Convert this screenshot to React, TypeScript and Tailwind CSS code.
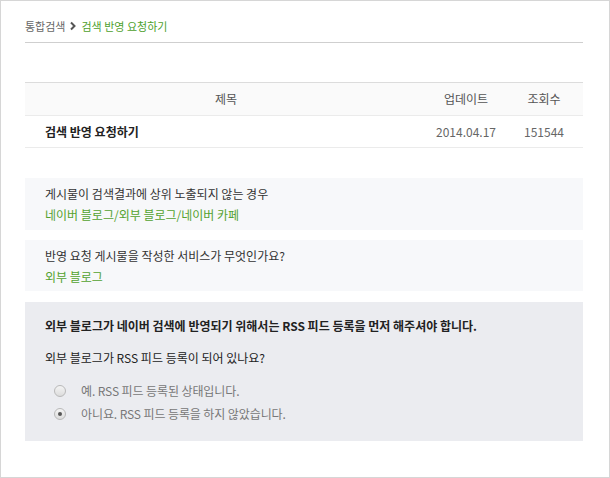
import React from 'react';

const font = { fontFamily: '"Noto Sans CJK KR", "Noto Sans", sans-serif' };

function Radio({ checked }: { checked?: boolean }) {
  return (
    <span className="w-[12px] h-[12px] rounded-full border border-[#b9b9b9] bg-gradient-to-b from-[#f4f4f4] to-[#dcdcdc] flex items-center justify-center">
      {checked && <span className="w-[4px] h-[4px] rounded-full bg-[#555]" />}
    </span>
  );
}

export default function App() {
  return (
    <div
      style={font}
      className="w-[610px] h-[478px] border border-[#d6d6d6] bg-white pl-[24px] pr-[26px] text-[12px] text-[#333]"
    >
      {/* breadcrumb */}
      <div className="pt-[16px] pb-[7px] leading-[18px] border-b border-[#cfcfcf] flex items-center text-[11px]">
        <span className="text-[#666]">통합검색</span>
        <svg width="10" height="10" viewBox="0 0 10 10" className="mx-[3px]">
          <path d="M3 1.5 L6.5 5 L3 8.5" stroke="#555" strokeWidth="2" fill="none" />
        </svg>
        <span className="text-[#4e9f2d]">검색 반영 요청하기</span>
      </div>

      {/* table */}
      <div className="mt-[39px] border-t border-[#dcdcdc]">
        <div className="flex h-[33px] items-center bg-[#fafafa] border-b border-[#ebebeb] text-[#555]">
          <div className="flex-1 text-center">제목</div>
          <div className="w-[78px] text-center">업데이트</div>
          <div className="w-[78px] text-center">조회수</div>
        </div>
        <div className="flex h-[32px] items-center border-b border-[#ebebeb]">
          <div className="flex-1 pl-[20px] font-bold text-[#222]">검색 반영 요청하기</div>
          <div className="w-[78px] text-center text-[#666]">2014.04.17</div>
          <div className="w-[78px] text-center text-[#666]">151544</div>
        </div>
      </div>

      {/* steps */}
      <div className="mt-[30px] bg-[#f7f8fa] pl-[20px] py-[5px] leading-[21px]">
        <div>게시물이 검색결과에 상위 노출되지 않는 경우</div>
        <div className="text-[#53a22f]">네이버 블로그/외부 블로그/네이버 카페</div>
      </div>
      <div className="mt-[10px] bg-[#f7f8fa] pl-[20px] pt-[5px] pb-[4px] leading-[21px]">
        <div>반영 요청 게시물을 작성한 서비스가 무엇인가요?</div>
        <div className="text-[#53a22f]">외부 블로그</div>
      </div>

      <div className="mt-[11px] h-[139px] bg-[#ebecf0] pl-[20px] pt-[14px] leading-[20px]">
        <div className="font-bold text-[#222]">
          외부 블로그가 네이버 검색에 반영되기 위해서는 RSS 피드 등록을 먼저 해주셔야 합니다.
        </div>
        <div className="mt-[12px] text-[#222]">외부 블로그가 RSS 피드 등록이 되어 있나요?</div>
        <div className="mt-[13px] flex items-center pl-[9px] text-[#777]">
          <Radio />
          <span className="ml-[15px] tracking-[-0.1px]">예. RSS 피드 등록된 상태입니다.</span>
        </div>
        <div className="mt-[3px] flex items-center pl-[9px] text-[#777]">
          <Radio checked />
          <span className="ml-[15px] tracking-[-0.1px]">아니요. RSS 피드 등록을 하지 않았습니다.</span>
        </div>
      </div>
    </div>
  );
}
